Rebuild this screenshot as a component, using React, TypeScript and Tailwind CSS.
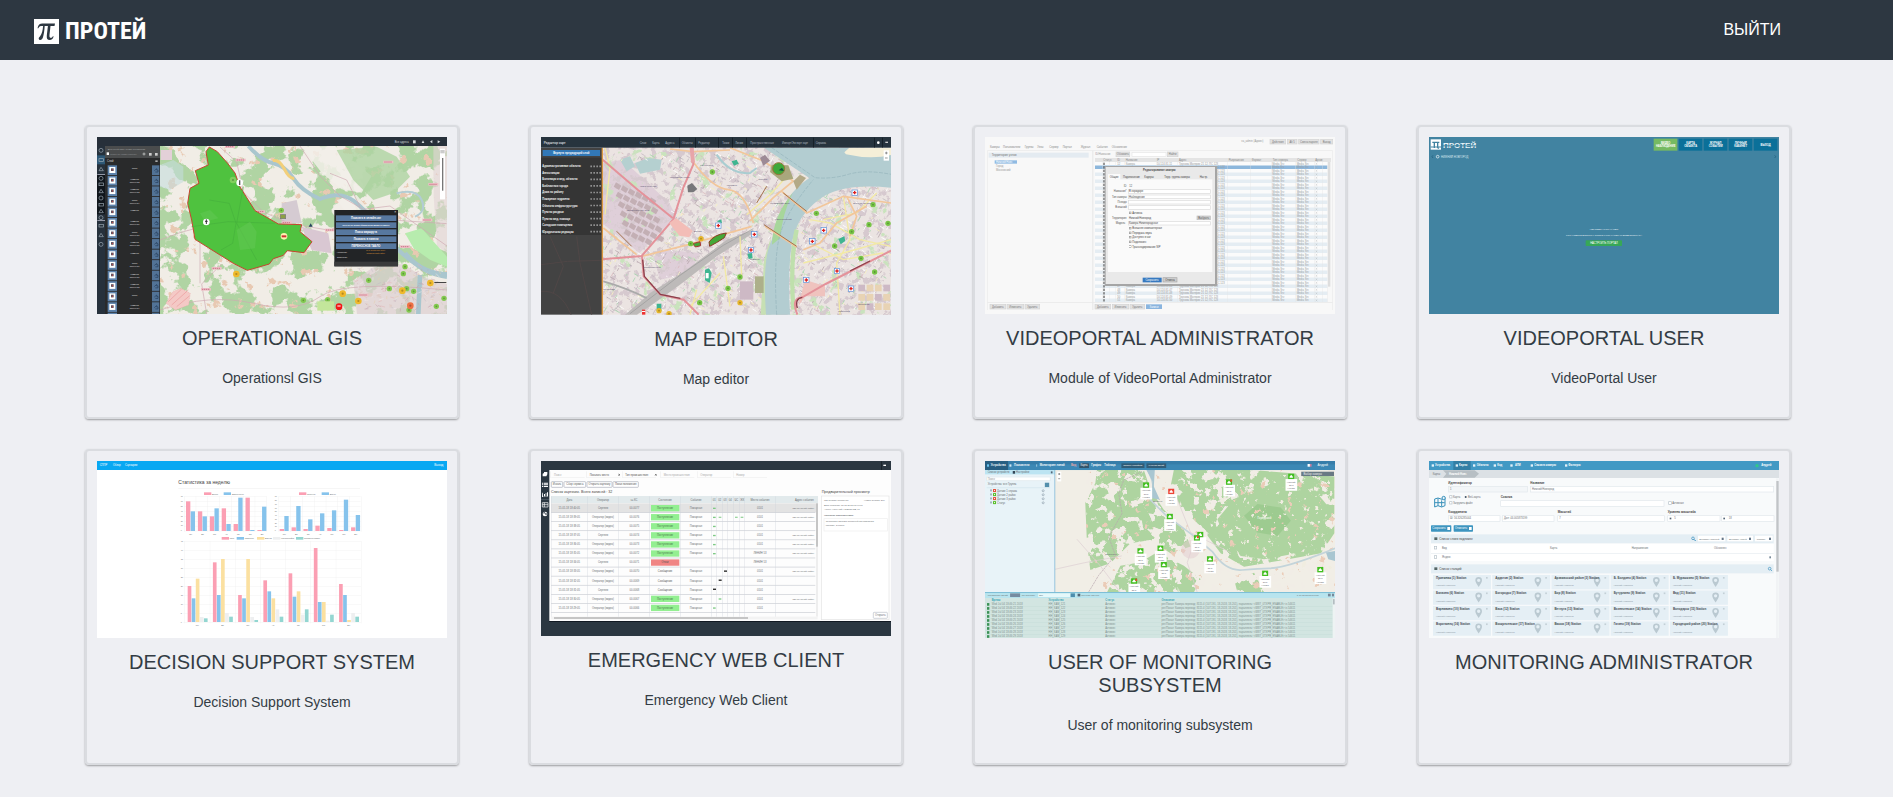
import type { ReactNode } from 'react'

const FONT = 'Liberation Sans, Arial, sans-serif'

function series(seed: number) {
  let s = seed
  return () => {
    s = (s * 16807) % 2147483647
    return s / 2147483647
  }
}

const range = (n: number) => Array.from({ length: n }, (_, i) => i)

type BoxProps = { x: number; y: number; w: number; h: number; c: string; s?: string; r?: number }
const Box = ({ x, y, w, h, c, s, r }: BoxProps) => (
  <rect x={x} y={y} width={w} height={h} fill={c} stroke={s} strokeWidth={s ? 2 : undefined} rx={r} />
)

type TxtProps = { x: number; y: number; c?: string; z?: number; b?: boolean; m?: boolean; children: ReactNode }
const Txt = ({ x, y, c = '#6b6f73', z = 11, b, m, children }: TxtProps) => (
  <text x={x} y={y} fill={c} fontSize={z} fontWeight={b ? 700 : 400} fontFamily={FONT} textAnchor={m ? 'middle' : 'start'}>
    {children}
  </text>
)

type NoiseProps = { id: string; freq: number; seed: number; rgb: [number, number, number]; gain: number; cut: number; x: number; y: number; w: number; h: number }
const Noise = ({ id, freq, seed, rgb, gain, cut, x, y, w, h }: NoiseProps) => (
  <>
    <filter id={id} x="0" y="0" width="1" height="1" colorInterpolationFilters="sRGB">
      <feTurbulence type="fractalNoise" baseFrequency={freq} numOctaves={5} seed={seed} />
      <feColorMatrix values={`0 0 0 0 ${rgb[0]} 0 0 0 0 ${rgb[1]} 0 0 0 0 ${rgb[2]} ${gain} 0 0 0 ${-gain * cut}`} />
    </filter>
    <rect x={x} y={y} width={w} height={h} filter={`url(#${id})`} />
  </>
)

const Dots = ({ at, c, r = 8 }: { at: number[][]; c: string; r?: number }) => (
  <>
    {at.map(([x, y]) => (
      <g key={`${x}-${y}`}>
        <circle cx={x} cy={y} r={r} fill={c} />
        <circle cx={x} cy={y} r={r / 3} fill="#000" opacity=".25" />
      </g>
    ))}
  </>
)

function Frame({ view, label, children }: { view: string; label: string; children: ReactNode }) {
  return (
    <svg viewBox={view} role="img" aria-label={label} className="block w-full">
      {children}
    </svg>
  )
}

function GisPreview() {
  const rnd = series(71)
  return (
    <Frame view="291 411 1050 531" label="Operational GIS preview">
      <Box x={480} y={436} w={861} h={506} c="#f1ede6" />
      <Noise id="g1" freq={0.016} seed={8} rgb={[0.69, 0.83, 0.64]} gain={18} cut={0.5} x={480} y={438} w={861} h={504} />
      <Noise id="g2" freq={0.03} seed={23} rgb={[0.91, 0.79, 0.7]} gain={14} cut={0.68} x={480} y={438} w={861} h={504} />
      <path d="M905 440l100-2 60 50 50 40-30 50-60-10-60-50zM1010 600l60-15 50 60-60 20z" fill="#f2efe9" opacity=".85" />
      <path d="M1010 450l120-10 60 30 40 60-50 50-60 20-60-60z" fill="#aed3a1" opacity=".8" />
      <Box x={482} y={450} w={34} h={30} c="#e3d0d8" />
      <path d="M480 495l40-15 30 20 0 45-40 25-30-10z" fill="#c4dcdc" opacity=".6" />
      <path d="M1060 842l60-40 90-10 60 40 71 20v90h-270z" fill="#ddcfd2" opacity=".7" />
      <path d="M1300 438h41v320l-30-20-10-150z" fill="#e2d3d6" opacity=".6" />
      <path d="M845 610l45-10 15 70-60 0z" fill="#d5cbd2" />
      <path d="M905 680l80 20 10 60-60-10z" fill="#d9c7d2" />
      <path d="M1215 700l50-15 76 85v30l-50-20-50-35z" fill="#b7ecae" />
      <path d="M745 438q40 45 75 52t60 45 80 62q60-25 100 5t70 75 90 95 121 50" fill="none" stroke="#a9c6ce" strokeWidth="12" />
      <path d="M1215 760q50 60 126 70M1260 825l-5 117" fill="none" stroke="#a9c6ce" strokeWidth="14" />
      <path d="M1190 580q60-15 75 20t-20 50" fill="none" stroke="#b2ccd3" strokeWidth="6" />
      <path d="M818 482q20-5 35 25t30 28" fill="none" stroke="#f2cf7a" strokeWidth="9" />
      <path d="M480 720q120-50 190-40t140-20M660 441l50 45 20 90 60 60 80 35 120 20 110-60 90 30 150 10M480 930q150-50 280-20t200-20 381-20M600 850v-190l-30-60M900 438l60 90 60 60 70 40 80-10 171 120M1080 620l-40-80-50-20M620 942l-15-90 60-60" fill="none" stroke="#cfa9b2" strokeWidth="2" />
      {range(170).map((i) => {
        const x = 1030 + rnd() * 290
        const y = 800 + rnd() * 135
        return <path key={i} d={`M${x} ${y}l${rnd() * 30 - 15} ${rnd() * 24 - 12}`} stroke={['#c79fab', '#e3b0b0', '#c2bbc6', '#e6cdae', '#f3eeee'][i % 5]} strokeWidth="2" opacity=".75" />
      })}
      {[[722, 480], [690, 440], [780, 635], [650, 805], [618, 868], [990, 690], [1165, 486], [1282, 660], [1300, 553], [1215, 740], [1090, 885], [860, 668]].map(([x, y]) => (
        <g key={x}>
          <Box x={x - 15} y={y - 4} w={30} h={8} c="#eebfc6" />
          <path d={`M${x - 12} ${y}h24`} stroke="#c9788a" strokeWidth="3" strokeDasharray="4 2" />
        </g>
      ))}
      <path d="M498 910l20-35 25-10 28 15-5 35-40 15z" fill="#f4c9c6" stroke="#e59b9b" strokeDasharray="4 3" />
      <path d="M505 905l40-38M515 915l50-45M530 920l38-32" stroke="#ea9a9a" strokeWidth="2" />
      <path d="M628 441l24 14 30 34 23 30 15 42 45 71 70 40 70 2-5 21 36 30-24 33-50-6-12 14-30 10-12 16-66 19-42-21-115-72-10-58-12-50 7-45 27-15-11-38 39-17-7-40z" fill="#4fc23f" stroke="#c5452f" strokeWidth="3" />
      <path d="M628 600l60 10 20 60-10 60-35 20M575 680l110-15 140 5M730 560l-20 110 60 110" fill="none" stroke="#46b03c" strokeWidth="2" />
      <path d="M710 690l40-25 20 30-5 50-45 5zM600 640l30-10 25 25-40 10z" fill="#60c652" opacity=".6" />
      <circle cx="619" cy="666" r="10" fill="#fff" /><path d="M619 658v14M615 664h8" stroke="#333" strokeWidth="3" />
      <circle cx="719" cy="548" r="10" fill="#fff" /><path d="M719 541v14" stroke="#555" strokeWidth="4" />
      <Dots at={[[699, 540]]} c="#7fce5c" r={10} />
      <circle cx="852" cy="709" r="10" fill="#fff3b0" /><path d="M845 709h14" stroke="#c33" strokeWidth="6" />
      <Box x={841} y={644} w={16} h={12} c="#8ca045" s="#777" />
      <Dots at={[[844, 631], [1106, 841], [1168, 866], [1210, 821], [1215, 800], [1220, 866], [1241, 874], [1332, 895], [1309, 919], [1227, 930], [910, 901], [983, 899]]} c="#82c94f" />
      <Dots at={[[709, 822], [1028, 881], [1075, 903], [1207, 872], [1291, 849]]} c="#efb92c" r={10} />
      <Dots at={[[1231, 917]]} c="#ee7043" r={10} />
      <Box x={952} y={904} w={50} h={28} c="#c3e69b" />
      <circle cx="1017" cy="920" r="10" fill="#f01818" /><path d="M1012 918h10" stroke="#fff" strokeWidth="3" />
      <path d="M926 680l6-10 6 10z" fill="#27455f" />
      <Box x={1303} y={846} w={36} h={3} c="#444" />
      <Box x={1003} y={630} w={191} h={169} c="#222426" />
      <Box x={1003} y={785} w={191} h={14} c="#3a3b3c" />
      <Txt x={1183} y={640} c="#fff" z={10}>×</Txt>
      {['Показать в онлайн-чат', 'ПОКАЗАТЬ БЛИЖАЙШИЕ ДОМ-ВИДЕОКАМЕРЫ', 'Поиск маршрута', 'Показать в панели', 'ПЕРЕНОСНОЕ ТАБЛО'].map((s, i) => (
        <g key={s}>
          <Box x={1008} y={646 + i * 21} w={181} h={17} c="#57789f" />
          <Txt x={1098} y={658 + i * 21} c="#fff" z={i === 1 ? 6 : 8} b m>{s}</Txt>
        </g>
      ))}
      <Txt x={1010} y={759} c="#ddd" z={7}>Название</Txt>
      <Txt x={1010} y={775} c="#ddd" z={7}>Описание</Txt>
      <Txt x={1127} y={754} c="#d69037" z={6} m>11-я пожарная часть</Txt>
      <Txt x={1127} y={762} c="#d69037" z={6} m>Приволжский район</Txt>
      <Box x={1320} y={446} w={15} h={152} c="#fff" /><Box x={1326} y={474} w={4} h={98} c="#777" /><Box x={1321} y={450} w={13} h={10} c="#ccc" />
      <Box x={291} y={411} w={1050} h={27} c="#27303a" />
      <Txt x={1184} y={429} c="#cfd4d8" z={8}>Все адреса</Txt>
      <Box x={1239} y={421} w={8} h={9} c="#d7dbde" />
      <path d="M1265 429l4-8 4 8zM1290 425l7-5v10zM1313 421l8 4-8 5z" fill="#d7dbde" />
      <Box x={291} y={438} w={24} h={504} c="#26313c" /><Box x={291} y={466} w={24} h={27} c="#2e5876" /><Box x={291} y={525} w={24} h={118} c="#10161c" />
      {[451, 480, 507, 535, 553, 573, 594, 614, 633, 653, 677, 705, 733].map((y, i) => (
        <g key={y} stroke="#9eabb5" fill="none" strokeWidth="2">
          {i % 3 === 0 ? <circle cx="303" cy={y} r="6" /> : i % 3 === 1 ? <rect x="297" y={y - 4} width="13" height="8" /> : <path d={`M297 ${y + 5}l6-10 7 10z`} />}
        </g>
      ))}
      <Box x={292} y={522} w={23} h={2} c="#ccd" /><Box x={292} y={660} w={23} h={2} c="#ccd" />
      <Box x={315} y={438} w={165} h={504} c="#292a2b" /><Box x={315} y={438} w={165} h={36} c="#4a4c4d" />
      <Txt x={323} y={449} c="#a5a8aa" z={7}>Дежурный план-схема территории</Txt>
      <Box x={320} y={457} w={7} h={8} c="#fff" />
      <Txt x={331} y={466} c="#8b8e90" z={7}>Поиск по наименованию</Txt>
      <circle cx="432" cy="462" r="3" stroke="#ddd" fill="none" strokeWidth="2" /><Box x={447} y={459} w={8} h={8} c="#ccc" /><Box x={465} y={459} w={8} h={8} c="#ccc" />
      <Txt x={321} y={487} c="#ddd" z={8}>Слой</Txt><Box x={466} y={481} w={7} h={5} c="#aaa" />
      {range(14).map((i) => {
        const y = 496 + i * 31.6
        return (
          <g key={i}>
            <Box x={323} y={y} w={28} h={29} c="#5c82ab" /><Box x={328} y={y + 5} w={18} h={18} c="#fff" />
            <Box x={333} y={y + 9} w={8} h={8} c="#5a5260" /><Box x={336} y={y + 12} w={3} h={3} c="#c44" />
            <Box x={456} y={y} w={22} h={29} c="#527396" />
            <path d={`M463 ${y + 16}l7-6v4h4v6h-8`} fill="none" stroke="#253d59" strokeWidth="2" />
            <Txt x={404} y={y + 12} c="#e2e2e2" z={7} m>{i % 3 === 0 ? 'Пост' : 'Камера'}</Txt>
            {i % 4 !== 0 && <Txt x={404} y={y + 21} c="#cfcfcf" z={7} m>видео/{21 + i}</Txt>}
          </g>
        )
      })}
      <Box x={323} y={938} w={28} h={4} c="#5c82ab" /><Box x={456} y={938} w={22} h={4} c="#527396" />
    </Frame>
  )
}

function MapEditorPreview() {
  const rnd = series(9043)
  const menu: [number, string][] = [[389, 'Слои'], [427, 'Карта'], [466, 'Адреса'], [515, 'Объекты'], [565, 'Редактор'], [637, 'Точки'], [676, 'Линии'], [721, 'Пространственные'], [816, 'Импорт/Экспорт карт'], [917, 'Справка']]
  const list = ['Административные объекты', 'Автостанции', 'Больницы и мед. объекты', 'Библиотеки города', 'Дома по району', 'Пожарные гидранты', 'Объекты инфраструктуры', 'Пункты раздачи', 'Пункты мед. помощи', 'Складские помещения', 'Юридическая редакция']
  return (
    <Frame view="93 82 1050 533" label="Map editor preview">
      <Box x={276} y={112} w={867} h={503} c="#ebe4e2" />
      <path d="M278 160l60-10 140 130 20 40-110 110-112-90zM430 440l40-20 100 10-30 60-90 20z" fill="#dfcfd9" />
      <Noise id="m1" freq={0.05} seed={5} rgb={[0.84, 0.79, 0.81]} gain={9} cut={0.52} x={276} y={114} w={867} h={501} />
      <Noise id="m2" freq={0.025} seed={14} rgb={[0.79, 0.89, 0.74]} gain={12} cut={0.66} x={276} y={114} w={867} h={501} />
      <path d="M330 150l30-10 15 30-25 15zM375 160l40-15 40 5-5 30-60 12z" fill="#b5d0d0" />
      {range(34).map((i) => (
        <path key={i} d={`M${318 + (i % 6) * 21 + Math.floor(i / 6) * 6} ${218 + Math.floor(i / 6) * 28 + (i % 6) * 9}l16 10-7 13-16-10z`} fill="#c3afb4" />
      ))}
      {range(1300).map((i) => {
        const x = 285 + rnd() * 850
        const y = 125 + rnd() * 480
        const a = rnd() > 0.5 ? [12, 7] : [-6, 11]
        const k = 0.3 + rnd()
        if (x < 480 && y > 150 && y < 390 && y - 150 > (x - 450) * 1.2) return null
        return <path key={i} d={`M${x} ${y}l${a[0] * k} ${a[1] * k}`} stroke={['#fff', '#b9a8ae', '#f8f2c0', '#d9b8bd', '#c6b9c4', '#fff', '#a19da6', '#a8d6b0'][i % 8]} strokeWidth={i % 8 === 6 ? 1.5 : 2.5} />
      })}
      <path d="M345 615q60-50 75-65l110-70 80-60 40-30 80-30v10l-110 70-110 85-90 65-40 25z" fill="#bdbab9" />
      <path d="M360 612l150-115 130-90 90-50" fill="none" stroke="#999" strokeWidth="2" />
      <path d="M280 515q70 20 130 50" fill="none" stroke="#aaa" strokeWidth="5" />
      <path d="M762 450l-10 165h30v-230z" fill="#c7e0b4" />
      <path d="M800 215l85-25 15 20-30 40-50 10z" fill="#ece6df" />
      <path d="M762 114h381v120q-150-15-215 35t-80 120-8 226h-72q-10-150 10-205t40-110 80-95z" fill="#b3cdd1" />
      <path d="M1003 128l15-14h125v22q-60 15-135-2z" fill="#f5efd8" />
      <path d="M848 250q-60 70-62 155l25-20q5-70 37-135z" fill="#a7d69b" />
      <path d="M785 114l130 90q50 5 100-10t128 0M800 615q-10-170 10-240t100-165" fill="none" stroke="#94b4bb" strokeWidth="2" strokeDasharray="12 4" />
      <path d="M850 600q-10-150 10-240" fill="none" stroke="#bfe0ac" strokeWidth="13" />
      {range(12).map((i) => (
        <Box key={i} x={1045 + (i % 4) * 25} y={525 + Math.floor(i / 4) * 28} w={20} h={20} c={i % 3 ? '#e8d3b4' : '#cdb9c5'} />
      ))}
      <path d="M865 590l20-30h60v-30l-60-20z" fill="#efc3be" /><path d="M690 515h40v55h-40z" fill="#cdb9c5" /><path d="M735 500h26v50h-26z" fill="#adb08a" />
      <g fill="none" stroke="#f2e9a5" strokeWidth="4">
        <path d="M840 190l-60 65-70 60M640 440l20 150M880 460l120-30 143-40M900 400l100 50 120-20M1000 260l20 130-40 70 10 155M1100 250l-60 60-100 20M900 330l60 10 90 50 93 20M560 540l-20 75M540 590l90-100M690 380l5 120M285 114l15 60-15 140" />
      </g>
      <g fill="none" stroke="#f2c69a" strokeWidth="5">
        <path d="M545 150q60 85 110 90t75 100M660 114l100 40 90 60-60 50-70 70M725 350l-190 55-140 35M765 350l95 62M815 245l75 65 110-50 143 20M880 420l50-20 50-60 90-50M280 355l100 80M480 118l70 8 110-5M1010 260l30 60-20 60" />
      </g>
      <g fill="none" stroke="#e4929a" strokeWidth="6">
        <path d="M545 114l5 50-30 70-30 95-95 110-118 10M278 150l105 90 105 85M396 440l5 60 50 55 70 15 45 45M862 615q-20-50 15-52l70-40 196-100" />
      </g>
      <path d="M545 114l4 45" stroke="#e7a5a9" strokeWidth="12" />
      <path d="M398 450l5 50 48 54 60 12M862 595q-8-28 15-32M1020 484l60-30" fill="none" stroke="#8a3f4a" strokeWidth="4" />
      <path d="M740 280l30-50M820 250l70 55M762 345l98 65M320 365l45 45" stroke="#a2714b" strokeWidth="3" />
      <path d="M478 340l20-15 50 38-10 20-30-5z" fill="#f3bdb7" />
      <path d="M785 165l50 2 15 40-35 8-35-28z" fill="#a9a77c" /><path d="M850 215l20-20 18 10-28 35z" fill="#b3a987" />
      <circle cx="806" cy="177" r="18" fill="#3fa83a" stroke="#9a7339" strokeWidth="3" /><path d="M806 182l10-8 6 10z" fill="#14503b" />
      <path d="M597 397q15-22 52-27l-6 14q-25 17-44 26z" fill="#44a838" stroke="#8b3a26" strokeWidth="3" />
      <path d="M548 402l22-6 2 12-16 4z" fill="#44a838" stroke="#a33" strokeWidth="3" />
      <path d="M532 228l14-8 16 18-12 10h-16z" fill="#77777a" />
      <path d="M750 145l15-10 15 18-20 15z" fill="#9d8a95" />
      <path d="M665 155l15-5 6 12-14 6zM585 480l12-4 8 14-6 30-14-8zM620 335l14-6 2 12zM712 432l14-2 2 16-12 2zM985 388l18-8 3 14-14 10zM440 582h14v22h-14z" fill="#3fb591" />
      <path d="M620 135q40 60 100 55l20-15" fill="none" stroke="#a9cdd1" strokeWidth="6" />
      <Box x={587} y={490} w={9} h={16} c="#fff" />
      {[[625, 348], [733, 374], [723, 421], [1034, 249], [941, 362], [907, 395], [981, 484], [889, 511], [1023, 537]].map(([x, y]) => (
        <g key={x}>
          <Box x={x - 8} y={y - 8} w={16} h={16} c="#fff" s="#5a8fd8" />
          <path d={`M${x - 5} ${y}h10M${x} ${y - 5}v10`} stroke="#d22" strokeWidth="4" />
        </g>
      ))}
      <Dots at={[[607, 187], [542, 402], [690, 502], [654, 536], [569, 579], [919, 311], [1089, 285], [1134, 341], [1077, 345], [1025, 366], [974, 409], [1053, 446], [1094, 487]]} c="#78c547" />
      <Dots at={[[573, 387], [690, 579], [447, 603], [477, 612]]} c="#e5b62b" />
      <Box x={396} y={600} w={10} h={15} c="#e33" /><Box x={396} y={604} w={10} h={3} c="#fff" />
      <g fill="#5b5370" fontFamily={FONT} fontSize="7">
        {([[350, 303, 'Промышленная зона'], [400, 475, 'Сортировочный'], [552, 368, 'Вокзал'], [572, 170, 'Мещерское'], [795, 330, 'Нижегородский'], [1030, 283, 'Верхние Печёры'], [745, 210, 'Стрелка'], [650, 228, 'Канавино'], [780, 283, 'Канавинский мост'], [280, 541, 'Ленинский'], [720, 452, 'Ярмарка'], [985, 606, 'Приокский'], [480, 205, 'Московское шоссе'], [390, 233, 'улица Рябцева'], [1045, 585, 'Щербинки']] as [number, number, string][]).map(([x, y, s]) => (
          <text key={s} x={x} y={y}>{s}</text>
        ))}
      </g>
      <Box x={1121} y={122} w={16} h={31} c="#fff" /><path d="M1125 130h8M1129 126v8M1125 145h8" stroke="#666" strokeWidth="2" />
      <Box x={93} y={114} w={183} h={501} c="#434343" />
      <Box x={93} y={144} w={183} h={232} c="#353535" />
      <path d="M93 465l80-10 103-3M200 380l10 80 35 155M93 545q60-5 90 70M120 380l40 90-30 80" fill="none" stroke="#4f4646" strokeWidth="3" />
      <Box x={275} y={114} w={4} h={501} c="#dc9840" />
      <Box x={98} y={121} w={172} h={18} c="#3278b7" />
      <Txt x={184} y={133} c="#fff" z={8} b m>Вернуть предыдущий слой</Txt>
      {list.map((s, i) => (
        <g key={s}>
          <Txt x={97} y={173 + i * 19.6} c="#f5f5f5" z={8} b>{s}</Txt>
          <path d={`M241 ${170 + i * 19.6}h32`} stroke="#8f8f8f" strokeWidth="5" strokeDasharray="5 4" />
        </g>
      ))}
      <Box x={93} y={82} w={1050} h={32} c="#27343e" />
      <Txt x={101} y={102} c="#fff" z={10}>Редактор карт</Txt>
      {menu.map(([x, s]) => <Txt key={s} x={x} y={102} c="#b3bdc4" z={8}>{s}</Txt>)}
      {[508, 556, 625, 667, 709, 909, 1093, 1117].map((x) => <Box key={x} x={x} y={84} w={2} h={30} c="#0e171e" />)}
      <circle cx="1105" cy="99" r="4" fill="#fff" /><Box x={1126} y={96} w={8} h={4} c="#ccc" />
    </Frame>
  )
}

function PortalAdminPreview() {
  const fields = ['Название*', 'Тип камеры', 'Псевдо', 'Внешний']
  const checks: [number, string][] = [[309, 'Активна'], [355, 'Внешняя компьютерная'], [369, 'Передача звука'], [382, 'Доступен в чат'], [396, 'Подключен'], [410, 'Транскодирование SIP']]
  return (
    <Frame view="75 81 1050 531" label="VideoPortal administrator preview">
      <Box x={75} y={81} w={1050} h={531} c="#f8f8f8" />
      <Txt x={844} y={97} c="#999" z={8}>va_admin (Админ)</Txt>
      {([[930, 47, 'Действия'], [982, 29, 'Alt 5'], [1016, 61, 'Смена пароля'], [1082, 36, 'Выход'], [90, 47, 'Добавить'], [141, 50, 'Изменить'], [195, 44, 'Удалить'], [405, 47, 'Добавить'], [457, 49, 'Изменить'], [510, 44, 'Удалить'], [468, 41, 'Обновить'], [622, 32, 'Найти']] as [number, number, string][]).map(([x, w, s], i) => {
        const y = i < 4 ? 88 : i < 10 ? 583 : 126
        return (
          <g key={i}>
            <Box x={x} y={y} w={w} h={14} c="#e2e2e2" s="#d4d4d4" />
            <Txt x={x + w / 2} y={y + 10} c="#777" z={8} m>{s}</Txt>
          </g>
        )
      })}
      <Box x={558} y={583} w={48} h={14} c="#8ab5df" /><Txt x={582} y={593} c="#fff" z={8} m>Записи</Txt>
      {([[90, 'Камеры'], [129, 'Пользователи'], [194, 'Группы'], [232, 'Узлы'], [268, 'Сервер'], [308, 'Портал'], [362, 'Журнал'], [410, 'События'], [455, 'Обновление']] as [number, string][]).map(([x, s]) => (
        <Txt key={s} x={x} y={115} c="#888" z={8}>{s}</Txt>
      ))}
      <Box x={82} y={120} w={1036} h={2} c="#e9e9e9" />
      <Box x={86} y={128} w={300} h={15} c="#e4ebf1" /><Txt x={95} y={139} c="#777" z={9}>Территория узлов</Txt>
      <Box x={104} y={151} w={67} h={10} c="#90bbe3" /><Txt x={108} y={159} c="#fff" z={8}>Нижний Новг.</Txt>
      <Txt x={108} y={171} c="#999" z={8}>Город</Txt><Txt x={108} y={183} c="#999" z={8}>Московский</Txt>
      <Box x={82} y={576} w={1036} h={2} c="#e6e6e6" /><Box x={81} y={122} w={2} h={478} c="#eaeaea" /><Box x={397} y={122} w={3} h={478} c="#e6e6e6" /><Box x={1116} y={122} w={2} h={478} c="#eaeaea" />
      <Txt x={406} y={136} c="#999" z={8}>ID/Название</Txt>
      <Box x={516} y={127} w={102} h={12} c="#fff" s="#e6e6e6" />
      <Box x={405} y={144} w={708} h={12} c="#e4e4e4" />
      {([[430, 'Статус'], [472, 'ID'], [497, 'Название'], [590, 'IP'], [657, 'Адрес'], [806, 'Разрешение'], [875, 'Формат'], [938, 'Тип сервера'], [1012, 'Сервер'], [1066, 'Архив']] as [number, string][]).map(([x, s]) => (
        <Txt key={s} x={x} y={153} c="#888" z={8}>{s}</Txt>
      ))}
      {range(40).map((i) => {
        const y = 156 + i * 10.5
        const c = i === 1 ? '#8db7dc' : i % 2 ? '#e5edf3' : '#fbfbfb'
        const hidden = i > 0 && i < 35
        return (
          <g key={i}>
            <Box x={405} y={y} w={697} h={10.5} c={c} />
            <Box x={430} y={y + 2} w={4} h={7} c="#666" />
            {!hidden && (
              <>
                <Txt x={472} y={y + 8} c="#999" z={8}>{12 + i}</Txt>
                <Txt x={497} y={y + 8} c="#999" z={8}>Камера</Txt>
                <Txt x={590} y={y + 8} c="#999" z={8}>10.124.81.{11 + i}</Txt>
                <Txt x={657} y={y + 8} c="#999" z={8}>Трунова Материк 21 12, ПС 123</Txt>
              </>
            )}
            {hidden && <Txt x={773} y={y + 8} c="#999" z={8}>С 123</Txt>}
            <Txt x={937} y={y + 8} c="#9a9fa4" z={8}>Media Srv</Txt>
            <Txt x={1010} y={y + 8} c="#9a9fa4" z={8}>Media Srv</Txt>
            <path d={`M1067 ${y + 3}l5 5M1072 ${y + 3}l-5 5`} stroke="#aaa" />
          </g>
        )
      })}
      <g fill="#e4e4e4">
        {[428, 448, 465, 493, 588, 653, 803, 872, 934, 1006, 1062, 1087, 1102].map((x) => <rect key={x} x={x} y="146" width="1" height="430" />)}
      </g>
      <Box x={1104} y={156} w={7} h={374} c="#dedede" />
      <Box x={434} y={168} w={338} h={360} c="#a5a5a5" r={3} />
      <Box x={437} y={171} w={328} h={351} c="#e9e9e9" />
      <Box x={444} y={208} w={313} h={278} c="#fafafa" />
      <Txt x={598} y={182} c="#444" z={8} b m>Редактирование камеры</Txt>
      <Box x={444} y={192} w={37} h={17} c="#fafafa" />
      {([[449, 'Общие'], [489, 'Подключение'], [553, 'Кодеры'], [613, 'Терр. группа камеры'], [719, 'Настр.']] as [number, string][]).map(([x, s]) => (
        <Txt key={s} x={x} y={205} c="#444" z={8}>{s}</Txt>
      ))}
      <Txt x={491} y={230} c="#555" z={8}>ID</Txt><Txt x={508} y={230} c="#555" z={8}>12</Txt>
      {fields.map((s, i) => (
        <g key={s}>
          <text x="500" y={247 + i * 16} fontFamily={FONT} fontSize="8" fill="#555" textAnchor="end">{s}</text>
          <Box x={505} y={239 + i * 16} w={246} h={11} c="#fff" s="#dadada" />
          {i < 2 && <Txt x={507} y={247 + i * 16} c="#444" z={8}>{['В коридоре', 'Наблюдение'][i]}</Txt>}
        </g>
      ))}
      <Txt x={456} y={327} c="#555" z={8}>Территория</Txt><Txt x={507} y={327} c="#444" z={8}>Нижний Новгород</Txt>
      <Box x={711} y={318} w={40} h={11} c="#d1d1d1" s="#bbb" /><Txt x={731} y={327} c="#555" z={8} m>Выбрать</Txt>
      <Txt x={467} y={343} c="#555" z={8}>Модель</Txt><Box x={505} y={335} w={246} h={10} c="#fff" s="#dadada" /><Txt x={507} y={343} c="#444" z={8}>Камера Нижегородская</Txt>
      {checks.map(([y, s]) => (
        <g key={s}><Box x={508} y={y - 3} w={5} h={5} c="#fff" s="#999" /><Txt x={517} y={y + 3} c="#444" z={8}>{s}</Txt></g>
      ))}
      <Box x={548} y={503} w={57} h={14} c="#3679c0" /><Txt x={576} y={513} c="#fff" z={8} m>Сохранить</Txt>
      <Box x={609} y={503} w={42} h={13} c="#ccc" s="#aaa" /><Txt x={630} y={513} c="#444" z={8} m>Отмена</Txt>
    </Frame>
  )
}

function PortalUserPreview() {
  const tabs = [['ВИДЕО', 'НАБЛЮДЕНИЕ'], ['КАРТА', 'ОБЪЕКТА'], ['ЖУРНАЛ', 'СОБЫТИЙ'], ['ЛИЧНЫЙ', 'КАБИНЕТ'], ['ВЫХОД']]
  return (
    <Frame view="87 411 1050 531" label="VideoPortal user preview">
      <Box x={87} y={411} w={1050} h={531} c="#4183a1" />
      <Box x={92} y={418} w={31} h={31} c="#fff" />
      <path d="M92 441h31" stroke="#4183a1" strokeWidth="3" />
      <path d="M97 427h21M103 427v17M113 427v15q0 3 4 2" fill="none" stroke="#4183a1" strokeWidth="4" />
      <Txt x={129} y={444} c="#eaf4f8" z={24} b>ПРОТЕЙ</Txt>
      <Box x={128} y={436} w={105} h={3} c="#4183a1" />
      {tabs.map((t, i) => (
        <g key={t[0]}>
          <Box x={761 + i * 75} y={416} w={71} h={36} c={i ? '#0b7099' : '#76ba62'} />
          {t.map((s, j) => <Txt key={s} x={797 + i * 75} y={(t.length > 1 ? 431 : 437) + j * 9} c="#fff" z={8} b m>{s}</Txt>)}
        </g>
      ))}
      <circle cx="113" cy="470" r="4" fill="none" stroke="#fff" strokeWidth="2" />
      <Txt x={123} y={473} c="#dce9ef" z={8}>НИЖНИЙ НОВГОРОД</Txt>
      <path d="M99 466l-3 4 3 4M1124 466l3 4-3 4" stroke="#1c5a77" fill="none" strokeWidth="2" />
      <Txt x={612} y={690} c="#eef6f9" z={7} m>НЕТ ИЗБРАННЫХ КАМЕР</Txt>
      <Txt x={612} y={709} c="#e5f0f4" z={7} m>УСТАНОВИТЕ ДОСТУП К СПИСОЧНЫМ КАМЕРАМ ВИДЕОПОРТАЛА</Txt>
      <Box x={557} y={721} w={109} h={17} c="#37a757" r={2} />
      <Txt x={612} y={733} c="#fff" z={8} m>НАСТРОИТЬ ПОРТАЛ</Txt>
    </Frame>
  )
}

const PINK = '#fb9fb3'
const BLUE = '#86c3ec'
const YELLOW = '#fbe0a0'
const GREY = '#eeeff0'
const TEAL = '#93d6d1'

function DecisionPreview() {
  const left = [[187, 217], [217, 232], [232, 208], [208, 255], [255, 176], [176, 273], [273, 203]]
  const right = [[270, 231], [265, 201], [270, 241], [260, 223], [267, 214], [273, 182], [265, 228]]
  const big = [[441, 478, 419, 534, 538], [370, 468, 360, 522, 533], [468, 478, 360, 534, 543], [424, 457, 478, 511, 533], [403, 473, 457, 527, 511], [327, 489, 489, 545, 527], [435, 468, 543, 522, 533]]
  const pair = [PINK, BLUE]
  const five = [PINK, BLUE, YELLOW, GREY, TEAL]
  const days = ['Пн', 'Вт', 'Ср', 'Чт', 'Пт', 'Сб', 'Вс']
  return (
    <Frame view="81 66 1050 531" label="Decision support system preview">
      <Box x={81} y={66} w={1050} h={531} c="#fff" /><Box x={81} y={66} w={1050} h={27} c="#08a8f2" />
      <Txt x={89} y={82} c="#fff" z={8}>СППР</Txt><Txt x={129} y={82} c="#fff" z={8}>Обзор</Txt><Txt x={165} y={82} c="#fff" z={8}>Сценарии</Txt><Txt x={1093} y={82} c="#fff" z={9}>Выход</Txt>
      <Txt x={325} y={134} c="#444" z={15}>Статистика за неделю</Txt>
      <Box x={325} y={148} w={545} h={1} c="#e5e5e5" />
      {range(8).map((i) => (
        <g key={i}>
          <Box x={342} y={172 + i * 14.8} w={248} h={1} c="#ededed" /><Box x={342 + i * 35.4} y={172} w={1} h={106} c="#ededed" />
          <Box x={626} y={172 + i * 14.8} w={246} h={1} c="#ededed" /><Box x={626 + i * 35.4} y={172} w={1} h={106} c="#ededed" />
          <Box x={344 + i * 75.6} y={306} w={1} h={247} c="#ededed" />
          <Txt x={332} y={175 + i * 14.5} c="#777" z={6}>{70 - i * 10}</Txt>
        </g>
      ))}
      {range(10).map((i) => (
        <g key={i}>
          <Box x={340} y={306 + i * 27} w={533} h={1} c="#ededed" />
          <Txt x={332} y={309 + i * 27} c="#777" z={6}>{45 - i * 5}</Txt>
          <Txt x={614} y={175 + i * 11.3} c="#777" z={6}>{90 - i * 10}</Txt>
        </g>
      ))}
      {left.map((v, i) => v.map((y, j) => <Box key={`${i}${j}`} x={348 + i * 35.7 + j * 14} y={y} w={13} h={276 - y} c={pair[j]} />))}
      {right.map((v, i) => v.map((y, j) => <Box key={`${i}${j}`} x={629 + i * 35.7 + j * 14} y={y} w={13} h={276 - y} c={pair[j]} />))}
      {big.map((v, i) => v.map((y, j) => <Box key={`${i}${j}`} x={353 + i * 75.7 + j * 12.2} y={y} w={11} h={549 - y} c={five[j]} />))}
      {days.map((d, i) => (
        <g key={d}>
          <Txt x={362 + i * 35.7} y={287} z={7} m>{d}</Txt><Txt x={643 + i * 35.7} y={287} z={7} m>{d}</Txt><Txt x={382 + i * 75.7} y={560} z={7} m>{d}</Txt>
        </g>
      ))}
      {([[402, 160, PINK, 'Всего'], [461, 160, BLUE, 'Завершено'], [687, 160, PINK, 'Ложные'], [755, 160, BLUE, 'Всего'], [455, 294, PINK, 'Пож.'], [500, 294, BLUE, 'Паводок'], [561, 294, YELLOW, 'Взрыв'], [609, 294, GREY, 'Катастрофа'], [678, 294, TEAL, 'Происшествие']] as [number, number, string, string][]).map(([x, y, c, s]) => (
        <g key={x}><Box x={x} y={y} w={22} h={8} c={c} /><Txt x={x + 24} y={y + 7} z={7}>{s}</Txt></g>
      ))}
    </Frame>
  )
}

function EmergencyPreview() {
  const cols: [number, string][] = [[178, 'Дата'], [279, 'Оператор'], [372, '№ КС'], [465, 'Состояние'], [558, 'Событие'], [613, '01'], [629, '02'], [645, '03'], [661, '04'], [679, 'ЧС'], [697, 'ЖК'], [750, 'Место события'], [883, 'Адрес события']]
  const full = new Set([0, 1, 2, 3, 4, 5, 10, 11])
  return (
    <Frame view="93 66 1050 525" label="Emergency web client preview">
      <Box x={93} y={66} w={1050} h={525} c="#2b3741" /><Box x={1114} y={67} w={2} h={26} c="#111a22" /><Box x={1120} y={77} w={8} h={4} c="#fff" />
      <Box x={118} y={93} w={1025} h={453} c="#fdfdfd" /><Box x={118} y={546} w={1025} h={3} c="#111922" />
      <path d="M98 104l4-2v-3h10v7l-3 6H98zM96 131h4v3h-4zm6 0h12v3h-12zm-6 5h4v3h-4zm6 0h12v3h-12zm-6 5h4v3h-4zm6 0h12v3h-12zM97 161h2v12h15v1H96zm5 4h3v7h-3zm5-3h2v10h-2zm4-2h3v12h-3z" fill="#fff" />
      <path d="M97 191h17v13H97zM97 197h17M103 191v13" fill="none" stroke="#fff" strokeWidth="2" />
      <Box x={93} y={180} w={24} h={2} c="#55616b" /><circle cx="105" cy="225" r="7" fill="#fff" /><path d="M100 222q6-3 6 2t5 0" stroke="#2b3741" strokeWidth="3" fill="none" />
      {([[130, 'Поиск'], [237, 'Показать место'], [344, 'Тип происшествия'], [459, 'Место происшествия'], [569, 'Оператор'], [677, 'Номер']] as [number, string][]).map(([x, s], i) => (
        <g key={s}><Txt x={x + 2} y={110} c={i < 3 && i ? '#555' : '#aaa'} z={8}>{s}</Txt><Box x={x - 6} y={116} w={100} h={1} c="#e2e2e2" /><Box x={x - 8} y={97} w={1} h={20} c="#e2e2e2" /></g>
      ))}
      <path d="M325 105l5 5M330 105l-5 5M435 105l5 5M440 105l-5 5" stroke="#555" strokeWidth="2" />
      {([[124, 34, 'Искать'], [162, 65, 'Сбор сервиса'], [231, 75, 'Открыть карточку'], [309, 76, 'Показ положения']] as [number, number, string][]).map(([x, w, s]) => (
        <g key={s}><Box x={x} y={128} w={w} h={17} c="#fff" s="#a9aeb9" r={2} /><Txt x={x + w / 2} y={139} c="#555" z={8} m>{s}</Txt></g>
      ))}
      <Txt x={123} y={162} c="#444" z={11}>Список карточек. Всего записей : 32</Txt>
      <Txt x={935} y={162} c="#444" z={11}>Предварительный просмотр</Txt>
      <Box x={123} y={171} w={801} h={21} c="#e2eaec" />
      {cols.map(([x, s]) => <Txt key={s} x={x} y={185} z={8} m>{s}</Txt>)}
      {range(13).map((i) => {
        const y = 193 + i * 27.2
        const ok = full.has(i)
        return (
          <g key={i}>
            {i === 0 && <Box x={123} y={y} w={796} h={27} c="#e3e3e3" />}
            {i > 0 && <Box x={123} y={y} w={793} h={1.5} c="#b9bdc5" />}
            {i < 12 && (
              <>
                <Txt x={178} y={y + 17} z={8} m>15.05.18 18:{40 - i}:05</Txt>
                <Txt x={279} y={y + 17} z={8} m>{i % 3 ? 'Оператор (видео)' : 'Сергеев'}</Txt>
                <Txt x={373} y={y + 17} z={8} m>00-00{77 - i}</Txt>
                {(ok || i === 6) && <Box x={423} y={y + 5} w={85} h={19} c={ok ? '#93ef91' : '#f08584'} />}
                <Txt x={465} y={y + 17} c={ok ? '#4a7a4a' : '#555'} z={8} m>{ok ? 'Поступление' : i === 6 ? 'Отказ' : 'Сообщение'}</Txt>
                {i !== 6 && <Txt x={558} y={y + 17} z={8} m>Пожарная</Txt>}
                {ok && <Box x={i === 10 ? 626 : 609} y={y + 13} w={8} h={4} c="#7ec985" />}
                {i > 6 && !ok && <Box x={i === 7 ? 642 : i === 8 ? 626 : 609} y={y + 11} w={9} h={4} c="#222" />}
                <Txt x={750} y={y + 17} z={8} m>{i === 5 || i === 6 ? 'ЛЕНИН 53' : '0101'}</Txt>
                {[0, 1, 3, 4, 5, 7, 10].includes(i) && <Txt x={880} y={y + 17} z={7} m>ЛЕНИНСКИЙ район</Txt>}
              </>
            )}
          </g>
        )
      })}
      <Box x={626} y={233} w={8} h={4} c="#9bd5a0" /><Box x={675} y={233} w={8} h={4} c="#9bd5a0" /><Box x={692} y={233} w={8} h={4} c="#9bd5a0" />
      {[123, 232, 325, 418, 511, 604, 620, 637, 653, 670, 687, 704, 796].map((x) => <Box key={x} x={x} y={172} w={1} h={363} c="#cdd1da" />)}
      <Box x={918} y={193} w={6} h={340} c="#eee" /><Box x={918} y={193} w={6} h={130} c="#c5c5c5" />
      <Box x={123} y={533} w={800} h={8} c="#f3f3f3" /><Box x={132} y={534} w={582} h={6} c="#c5c5c5" />
      <Box x={934} y={171} w={203} h={371} c="#fff" s="#e3e3e3" />
      <Txt x={942} y={185} z={7}>Тип вызова: Пожарная</Txt><Txt x={1062} y={185} z={7}>Номер вызова: 284</Txt>
      <Txt x={942} y={200} z={7}>Дата создания: 15.05.2018 18:40:05</Txt><Txt x={942} y={214} z={7}>Адрес: НИЖНИЙ НОВГОРОД, 17</Txt>
      <Txt x={942} y={230} z={7} b>Описание происшествия:</Txt><Box x={942} y={239} w={190} h={37} c="#fff" s="#ededed" />
      <Txt x={947} y={250} z={7}>Сработала система пожарной сигнализации</Txt><Txt x={947} y={261} z={7}>Магазин, 2 этажа</Txt>
      <Box x={1090} y={520} w={42} h={18} c="#fff" s="#b9c0c9" r={2} /><Txt x={1111} y={532} z={8} m>Открыть</Txt>
    </Frame>
  )
}

function MonitorUserPreview() {
  const pins: [number, number, boolean][] = [[557, 138, false], [632, 157, true], [628, 232, false], [719, 286, false], [709, 296, false], [600, 327, false], [540, 335, false], [610, 376, false], [748, 359, false], [521, 425, false], [913, 402, false], [1078, 391, false], [805, 129, false], [991, 112, false]]
  return (
    <Frame view="75 66 1047 531" label="Monitoring subsystem preview">
      <Box x={284} y={92} w={838} h={367} c="#f1eee6" />
      <path d="M410 92h140l20 60 40 60 60 60 20 50-60 20-60-40-60 10-60 60-60 20-10-80-5-120 30-60zM640 92l220 0 260 20v170l-40 60-110 20-120 20-70-40-60-80-60-60-30-60zM440 459l40-80 60-10 50-30 80 40 50 40-20 40zM820 420l60-20 30 59h-80z" fill="#aed4a0" />
      <Noise id="u1" freq={0.03} seed={31} rgb={[0.945, 0.93, 0.9]} gain={18} cut={0.54} x={380} y={92} w={742} h={367} />
      <path d="M770 240l50-60 60-25 90-35 80 20 50 60-20 70-60 70-110 20-70-10-50-60z" fill="#aed4a0" />
      <path d="M850 230l40-35 70 10 30 40-40 45-60-10z" fill="#9dcb90" />
      <Noise id="u3" freq={0.05} seed={44} rgb={[0.94, 0.93, 0.88]} gain={12} cut={0.66} x={740} y={110} w={382} h={280} />
      <Noise id="u2" freq={0.04} seed={12} rgb={[0.92, 0.8, 0.72]} gain={14} cut={0.7} x={380} y={92} w={742} h={367} />
      <path d="M560 92q30 50 10 90l45 45 80 60 60 50q40 60 90 55t80-5 90-20 107-40" fill="none" stroke="#c3d4da" strokeWidth="5" />
      <path d="M558 92l18 35-3 50 25 5-18-40 3-50z" fill="#a9c6d1" /><path d="M1095 340l27-5v30l-20-5z" fill="#a9c6d1" />
      <path d="M545 98l-55 25-15 40 10 60-40 70 20 55-50 60-30 50" fill="none" stroke="#b9a5ae" strokeWidth="2" strokeDasharray="7 2" />
      <path d="M284 390l90-20 110-20M350 300l70 80 60 79M700 310l-20 60 30 89M650 180l40 100 120 60" fill="none" stroke="#dccdd2" strokeWidth="2" />
      <circle cx="690" cy="330" r="28" fill="#e3ccd0" opacity=".5" />
      <Txt x={578} y={189} z={7}>Балахна</Txt><Txt x={435} y={347} z={7}>Володарск</Txt><Txt x={890} y={240} c="#eef7ea" z={8} b>Городской</Txt>
      {pins.map(([x, y, bad]) => (
        <g key={x}>
          <Box x={x - 17} y={y + 8} w={35} h={35} c="#fff" />
          {x !== 719 && <><Txt x={x} y={y + 19} z={7} m>Нижний</Txt><Txt x={x} y={y + 29} z={7} m>25.5</Txt><Txt x={x} y={y + 39} z={7} m>Норма</Txt></>}
          <Box x={x - 9} y={y - 8} w={18} h={16} c={bad ? '#ed4436' : '#42bf20'} />
          <path d={`M${x - 5} ${y + 4}v-3l5-6 5 6v3z`} fill="#fff" />
        </g>
      ))}
      <Box x={809} y={121} w={5} h={7} c="#ed4436" /><Box x={525} y={418} w={5} h={7} c="#ed4436" /><Box x={709} y={290} w={5} h={7} c="#ed4436" />
      <Box x={291} y={98} w={12} h={29} c="#fff" /><path d="M294 105h6M297 102v6M294 119h6" stroke="#666" strokeWidth="2" />
      <Box x={1021} y={98} w={98} h={13} c="#687984" /><Txt x={1028} y={107} c="#eee" z={8}>Выбор камеры</Txt>
      <Box x={75} y={66} w={1047} h={27} c="#3c88b5" /><Box x={75} y={66} w={1047} h={10} c="#367da9" /><Box x={75} y={66} w={69} h={27} c="#285f82" />
      <Box x={81} y={76} w={6} h={7} c="#6cc6f2" /><Box x={148} y={76} w={6} h={7} c="#cfe6f2" /><Box x={228} y={76} w={3} h={7} c="#9cc6de" />
      {([[92, 'Устройства'], [162, 'Показатели'], [239, 'Мониторинг линий'], [393, 'График'], [432, 'Таблица']] as [number, string][]).map(([x, s]) => <Txt key={s} x={x} y={82} c="#f4f9fc" z={8} b>{s}</Txt>)}
      <Txt x={332} y={82} c="#e8a6a6" z={8} b>Вид</Txt>
      <Box x={357} y={73} w={29} h={14} c="#32546b" /><Txt x={371} y={82} c="#fff" z={8} m>Карта</Txt>
      <Box x={483} y={73} w={69} h={14} c="#315c77" /><Box x={558} y={73} w={59} h={14} c="#315c77" /><Txt x={517} y={82} c="#fff" z={7} m>Список устройств</Txt><Txt x={587} y={82} c="#fff" z={7} m>Журнал линий</Txt>
      <Txt x={1070} y={82} c="#fff" z={9}>Андрей</Txt><Box x={1040} y={75} w={7} h={8} c="#fff" /><Box x={1047} y={75} w={5} h={8} c="#c77fa0" />
      <Box x={75} y={93} w={209} h={367} c="#e8f3f8" /><Box x={75} y={93} w={209} h={13} c="#bce4f2" /><Box x={283} y={93} w={2} h={367} c="#6eaed0" />
      <Txt x={83} y={102} z={8}>Список устройств</Txt><Box x={158} y={96} w={7} h={8} c="#345" /><Txt x={168} y={102} z={8}>Настройки</Txt><Box x={272} y={97} w={5} h={6} c="#567" />
      <Box x={80} y={114} w={190} h={11} c="#fff" s="#dfe9ee" /><Txt x={83} y={122} z={8} c="#999">Поиск</Txt><Txt x={83} y={139} z={8}>Устройства: вся Группа</Txt>
      <Box x={254} y={131} w={13} h={13} c="#538fac" /><Box x={80} y={146} w={190} h={1} c="#b9d4df" />
      {['Датчик 1 справа', 'Датчик 2 район', 'Датчик 3 район', 'Статус'].map((s, i) => (
        <g key={s}><Box x={90} y={151 + i * 12} w={6} h={6} c="#a6b7bf" /><Box x={99} y={150 + i * 12} w={9} h={9} c={i % 2 ? '#55bd25' : '#e34b37'} /><Box x={102} y={153 + i * 12} w={3} h={3} c="#fff" /><Txt x={111} y={158 + i * 12} z={8}>{s}</Txt><circle cx="249" cy={155 + i * 12} r="3" fill="none" stroke="#789" strokeWidth="1.5" /></g>
      ))}
      <Box x={75} y={459} w={1047} h={138} c="#d2e5e1" /><Box x={75} y={459} w={1047} h={17} c="#b8e4ee" /><Box x={75} y={458} w={1047} h={3} c="#7cbdd6" />
      <Txt x={83} y={470} z={7}>Мониторинг линий</Txt><Box x={150} y={462} w={30} h={11} c="#768ba0" /><Txt x={185} y={470} z={7}>По событию</Txt><Box x={234} y={462} w={97} h={11} c="#e5f8fa" /><Txt x={237} y={470} z={7}>Все</Txt>
      <Box x={331} y={462} w={13} h={11} c="#4e8dac" /><Box x={352} y={463} w={8} h={8} c="#567" /><Txt x={363} y={470} z={7}>Текущие данные</Txt><Txt x={1008} y={470} z={7}>1-10 из предыдущих</Txt><Box x={1101} y={463} w={8} h={8} c="#789" /><Box x={1113} y={463} w={6} h={8} c="#789" />
      {([[95, 'Время'], [265, 'Устройство'], [435, 'Статус'], [603, 'Описание']] as [number, string][]).map(([x, s]) => <Txt key={s} x={x} y={484} c="#3aa5b8" z={8} b>{s}</Txt>)}
      {range(9).map((i) => {
        const y = 495 + i * 12
        return (
          <g key={i}>
            <Box x={75} y={y + 5} w={1040} h={1} c="#bfdad3" /><Box x={81} y={y - 4} w={7} h={8} c="#3b9255" />
            <Txt x={95} y={y + 3} c="#81908e" z={8}>Wed Jul 04 18:46:{21 + i} 2018</Txt><Txt x={265} y={y + 3} c="#81908e" z={8}>НН_КАМ_{121 + i}</Txt><Txt x={435} y={y + 3} c="#81908e" z={8}>Активен</Txt>
            <Txt x={603} y={y + 3} c="#81908e" z={8}>рег/Показ: Камера перевод: 8115.4 (107.191, 18.2018, 18.201), параллель: &lt;6887_0TXPR_ENABLE&gt; is 54611</Txt>
          </g>
        )
      })}
      <Box x={1115} y={477} w={7} h={120} c="#edf3f3" /><Box x={1116} y={479} w={5} h={16} c="#b3bcc0" />
    </Frame>
  )
}

function MonitorAdminPreview() {
  const names = ['Приемная (1)', 'Ардатов (2)', 'Арзамасский район (3)', 'Б. Болдино (4)', 'Б. Мурашкино (5)', 'Балахна (6)', 'Богородск (7)', 'Бор (8)', 'Бутурлино (9)', 'Вад (11)', 'Варнавино (10)', 'Вача (12)', 'Ветлуга (13)', 'Вознесенское (14)', 'Володарск (15)', 'Воротынец (16)', 'Воскресенское (17)', 'Выкса (18)', 'Гагино (19)', 'Городецкий район (20)']
  const inputs = [[145, 142, 237], [391, 142, 730], [302, 185, 490], [145, 230, 155], [307, 230, 155], [473, 230, 320], [803, 230, 157], [965, 230, 157]]
  return (
    <Frame view="87 66 1050 531" label="Monitoring administrator preview">
      <Box x={87} y={66} w={1050} h={531} c="#f8fafb" /><Box x={87} y={66} w={1050} h={27} c="#4299c4" /><Box x={160} y={66} w={52} h={27} c="#347fa5" />
      {[95, 167, 219, 281, 331, 392, 495].map((x) => <Box key={x} x={x} y={76} w={7} h={7} c="#e3f2f9" />)}
      {([[105, 'Устройства'], [177, 'Карты'], [230, 'Объекты'], [292, 'Код'], [345, 'АПИ'], [403, 'Связать камеры'], [505, 'Фильтры'], [1084, 'Андрей']] as [number, string][]).map(([x, s]) => <Txt key={s} x={x} y={82} c="#fff" z={8} b>{s}</Txt>)}
      <circle cx="1071" cy="80" r="5" fill="#30c88b" />
      <Box x={87} y={93} w={1050} h={24} c="#dce1e5" /><path d="M129 94h95l13 10-13 12h-95l10-12z" fill="#b7bfc4" /><Txt x={98} y={107} z={8}>Карты</Txt><Txt x={147} y={107} c="#fff" z={8} b>Нижний Новг.</Txt>
      {inputs.map(([x, y, w]) => <Box key={`${x}${y}`} x={x} y={y} w={w} h={17} c={y === 142 && x === 145 ? '#f3f6f8' : '#fff'} s="#e2e8ec" />)}
      {([[145, 135, 'Идентификатор'], [391, 135, 'Название'], [302, 178, 'Ссылка'], [145, 222, 'Координаты'], [473, 222, 'Масштаб'], [803, 222, 'Уровень масштаба']] as [number, number, string][]).map(([x, y, s]) => <Txt key={s} x={x} y={y} c="#444" z={9} b>{s}</Txt>)}
      {([[150, 153, '1'], [396, 153, 'Нижний Новгород'], [150, 241, 'Ш: 56.326285044'], [312, 241, 'Дол: 44.005873199'], [478, 241, '7'], [823, 241, '5'], [986, 241, '18'], [159, 177, 'Карта'], [204, 177, 'Веб-карта'], [159, 195, 'Загрузить файл'], [817, 195, 'Активная']] as [number, number, string][]).map(([x, y, s]) => <Txt key={s} x={x} y={y} z={8}>{s}</Txt>)}
      <Box x={809} y={236} w={5} h={5} c="#567" /><Box x={970} y={236} w={5} h={5} c="#567" />
      <Box x={149} y={170} w={7} h={7} c="#fff" s="#b5c0c8" /><circle cx="197" cy="174" r="3" fill="#456" /><Box x={149} y={188} w={7} h={7} c="#fff" s="#b5c0c8" /><Box x={806} y={188} w={8} h={8} c="#fff" s="#b5c0c8" />
      <path d="M104 180l10-3 12 4 9-3v22l-10 4-11-4-10 4zM114 178v22M125 184v19M104 191h30" fill="none" stroke="#3890ba" strokeWidth="3" /><circle cx="131" cy="177" r="5" fill="#e5f3fa" stroke="#3890ba" strokeWidth="3" />
      <Box x={93} y={259} w={61} h={19} c="#3d95c0" r={2} /><Box x={161} y={259} w={58} h={19} c="#3d95c0" r={2} /><Txt x={97} y={271} c="#fff" z={8}>Сохранить</Txt><Txt x={165} y={271} c="#fff" z={8}>Отменить</Txt><Box x={142} y={264} w={8} h={9} c="#fff" /><Box x={207} y={264} w={8} h={9} c="#fff" />
      <Box x={93} y={286} w={1028} h={27} c="#e4eef4" /><Box x={103} y={295} w={9} h={8} c="#566" /><Txt x={118} y={303} c="#444" z={9}>Список слоев подложек</Txt>
      <Box x={894} y={290} w={82} h={17} c="#fff" /><Box x={982} y={290} w={77} h={17} c="#fff" /><Box x={1065} y={290} w={53} h={17} c="#fff" /><Txt x={898} y={302} z={7}>Добавить базовый</Txt><Txt x={987} y={302} z={7}>Добавить новый</Txt><Txt x={1070} y={302} z={7}>Удалить</Txt>
      <Box x={965} y={296} w={6} h={7} c="#678" /><Box x={1047} y={296} w={6} h={7} c="#678" /><Box x={1107} y={296} w={6} h={7} c="#678" />
      <circle cx="879" cy="298" r="4" fill="none" stroke="#338dbd" strokeWidth="2" /><path d="M882 301l5 5" stroke="#338dbd" strokeWidth="3" />
      <Box x={93} y={314} w={1028} h={28} c="#fff" /><Box x={93} y={345} w={1028} h={21} c="#fff" /><Box x={93} y={343} w={1028} h={1} c="#dbe4e9" />
      {([[126, 'Вид'], [450, 'Карта'], [695, 'Направление'], [942, 'Обновлен']] as [number, string][]).map(([x, s]) => <Txt key={s} x={x} y={331} z={8}>{s}</Txt>)}
      <Txt x={126} y={358} z={8}>Яндекс</Txt><Box x={103} y={322} w={7} h={8} c="#fff" s="#b5c0c8" /><Box x={103} y={350} w={7} h={8} c="#fff" s="#b5c0c8" /><Box x={1108} y={352} w={5} h={6} c="#789" />
      <Box x={93} y={376} w={1028} h={27} c="#e4eef4" /><Box x={103} y={385} w={9} h={8} c="#566" /><Txt x={118} y={393} c="#444" z={9}>Список станций</Txt><circle cx="1109" cy="389" r="4" fill="none" stroke="#338dbd" strokeWidth="2" /><path d="M1112 392l4 4" stroke="#338dbd" strokeWidth="2" />
      {names.map((s, i) => {
        const x = 99 + (i % 5) * 177.7
        const y = 408 + Math.floor(i / 5) * 46.4
        return (
          <g key={s}>
            <Box x={x} y={y} w={174} h={43} c="#e5eff5" />
            <path d={`M${x + 137} ${y + 6}a10 10 0 0 1 10 10q0 6-10 20q-10-14-10-20a10 10 0 0 1 10-10zm0 5a5 5 0 0 0 0 10a5 5 0 0 0 0-10z`} fill="#bac9d1" fillRule="evenodd" />
            <Txt x={x + 9} y={y + 11} c="#444c52" z={9} b>{s} Station</Txt><Txt x={x + 9} y={y + 34} c="#8794a0" z={7}>Нижний Новгород</Txt><Box x={x + 159} y={y + 6} w={5} h={5} c="#c3cfd6" />
          </g>
        )
      })}
      <Box x={1128} y={118} w={8} h={479} c="#f1f3f5" /><Box x={1129} y={126} w={7} h={272} c="#c1c4c7" />
    </Frame>
  )
}

const modules = [
  { title: 'OPERATIONAL GIS', text: 'Operationsl GIS', preview: <GisPreview /> },
  { title: 'MAP EDITOR', text: 'Map editor', preview: <MapEditorPreview /> },
  { title: 'VIDEOPORTAL ADMINISTRATOR', text: 'Module of VideoPortal Administrator', preview: <PortalAdminPreview /> },
  { title: 'VIDEOPORTAL USER', text: 'VideoPortal User', preview: <PortalUserPreview /> },
  { title: 'DECISION SUPPORT SYSTEM', text: 'Decision Support System', preview: <DecisionPreview /> },
  { title: 'EMERGENCY WEB CLIENT', text: 'Emergency Web Client', preview: <EmergencyPreview /> },
  { title: 'USER OF MONITORING SUBSYSTEM', text: 'User of monitoring subsystem', preview: <MonitorUserPreview /> },
  { title: 'MONITORING ADMINISTRATOR', text: '', preview: <MonitorAdminPreview /> },
]

export default function App() {
  return (
    <div className="min-h-screen bg-[#eeeff3] font-['Liberation_Sans',Arial,sans-serif] text-[#333c44]">
      <header className="flex h-15 items-center justify-between bg-[#2d3741] pr-28 pl-[34px]">
        <a href="#" className="flex items-center gap-1.5 pt-0.5 text-white">
          <svg viewBox="0 0 25 25" className="size-[25px]" aria-hidden="true">
            <path d="M0 0h25v25H0z" fill="#fff" />
            <path d="M3.5 9.2C4.3 5.8 5.6 4.6 8.4 4.6H21l-.5 2.5h-4l-1 8.6c-.2 2.2.2 3.1 1.3 3.1.9 0 1.6-.5 2-1.6h.8c-.5 2.500-1.800 3.800-3.900 3.800-2.400 0-3.200-1.700-2.900-4.600l1.100-9.300h-3.200c-.3 4.800-.9 8.700-1.800 11.500-.5 1.600-1.400 2.400-2.600 2.400-1 0-1.600-.6-1.600-1.500 0-.8.4-1.400 1.400-2.300C7.900 15 8.700 11.900 9.100 7.100H8C6 7.100 5.200 7.600 4.400 9.200z" fill="#2d3741" />
          </svg>
          <span className="font-['Liberation_Sans_Narrow','Roboto_Condensed',Roboto,sans-serif] text-2xl leading-8 font-bold">ПРОТЕЙ</span>
        </a>
        <a href="#" className="text-base text-white">ВЫЙТИ</a>
      </header>
      <main className="grid grid-cols-4 gap-x-[70px] gap-y-[30px] pt-[65px] pr-[102px] pb-7 pl-[85px]">
        {modules.map((m) => (
          <a key={m.title} href="#" className="block rounded border-2 border-[#dadce0] px-2.5 pt-2.5 pb-7 text-center shadow-[0_1px_2px_rgba(0,0,0,0.35)]">
            {m.preview}
            <h2 className="mt-[13px] text-xl leading-[23px]">{m.title}</h2>
            {m.text && <p className="mt-[18px] text-sm leading-5">{m.text}</p>}
          </a>
        ))}
      </main>
    </div>
  )
}
